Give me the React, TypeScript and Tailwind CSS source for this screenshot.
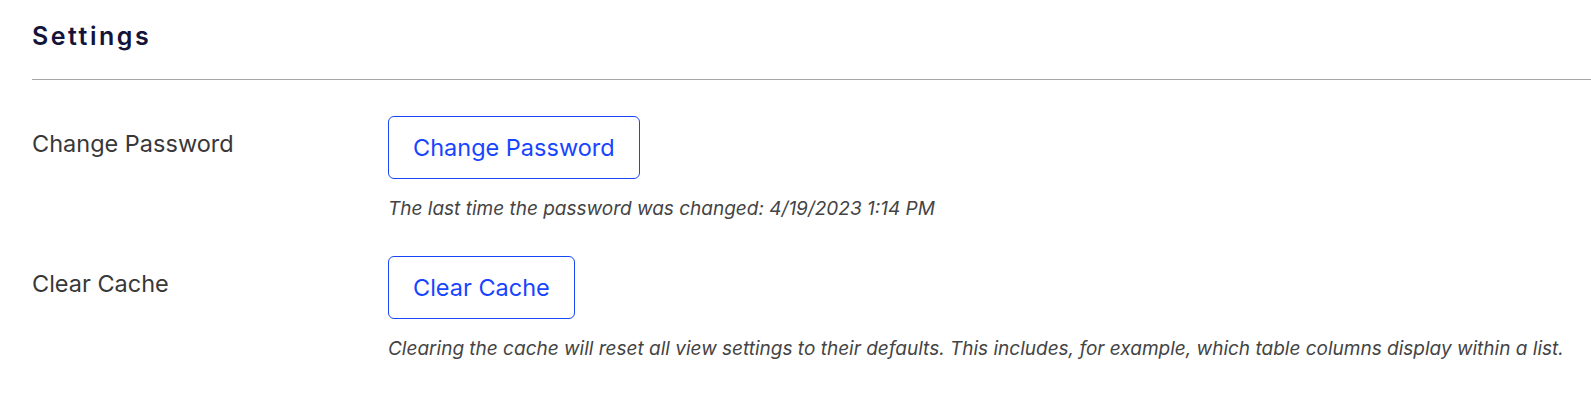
import React from 'react';

interface SettingRowProps {
  label: string;
  action: string;
  hint: string;
}

const SettingRow: React.FC<SettingRowProps> = ({ label, action, hint }) => {
  return (
    <div className="flex items-start">
      {/* Label column */}
      <div className="w-[356px] shrink-0 flex items-center h-[63px] pb-[7px]">
        <span className="text-[23.5px] text-[#383838]">{label}</span>
      </div>

      {/* Action column */}
      <div className="flex flex-col items-start">
        <button className="h-[63px] px-[24px] flex items-center rounded-[6px] border border-[#1947f5] bg-white text-[23.5px] text-[#1744ff]">
          {action}
        </button>
        <p className="mt-[17px] text-[19px] leading-[26px] italic text-[#444444]">{hint}</p>
      </div>
    </div>
  );
};

export default function App() {
  return (
    <div className="min-h-screen bg-white font-['Inter','Noto_Sans',sans-serif]">
      {/* Header */}
      <div className="ml-8 pt-5 pb-[27px] border-b border-[#a6a6a6]">
        <h1 className="text-[25px] leading-[32px] font-semibold tracking-[0.1em] text-[#14143a]">Settings</h1>
      </div>

      {/* Rows */}
      <div className="pl-8 pt-[36px] flex flex-col gap-[34px]">
        <SettingRow
          label="Change Password"
          action="Change Password"
          hint="The last time the password was changed: 4/19/2023 1:14 PM"
        />
        <SettingRow
          label="Clear Cache"
          action="Clear Cache"
          hint="Clearing the cache will reset all view settings to their defaults. This includes, for example, which table columns display within a list."
        />
      </div>
    </div>
  );
}
